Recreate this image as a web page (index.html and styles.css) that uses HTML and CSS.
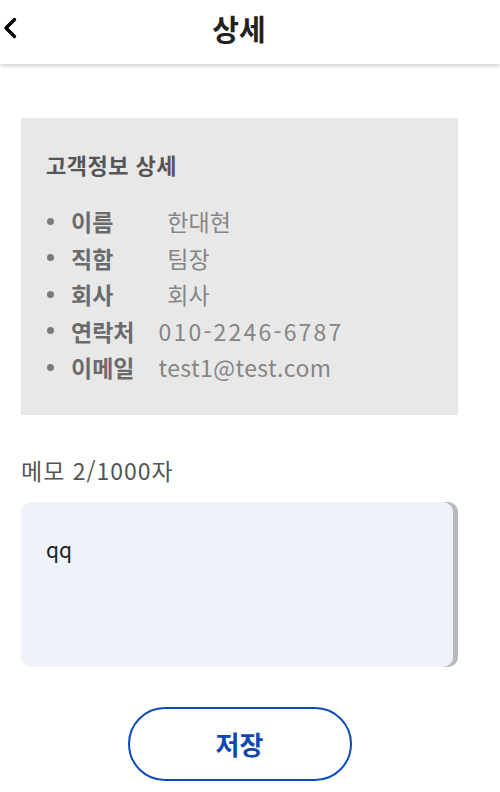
FILE: index.html
```html
<!DOCTYPE html>
<html lang="ko">
<head>
<meta charset="utf-8">
<link rel="stylesheet" href="styles.css">
</head>
<body>
<header class="topbar">
  <button class="back" aria-label="뒤로">
    <svg width="14" height="22" viewBox="0 0 14 22"><polyline points="11.5,2.5 3,11 11.5,19.5" fill="none" stroke="#000" stroke-width="3.4" stroke-linecap="round" stroke-linejoin="round"/></svg>
  </button>
  <h1 class="title">상세</h1>
  <span></span>
</header>
<main class="page">
  <section class="info">
    <h2 class="info-title">고객정보 상세</h2>
    <ul class="info-list">
      <li><span class="label short">이름</span><span class="value">한대현</span></li>
      <li><span class="label short">직함</span><span class="value">팀장</span></li>
      <li><span class="label short">회사</span><span class="value">회사</span></li>
      <li><span class="label">연락처</span><span class="value phone">010-2246-6787</span></li>
      <li><span class="label">이메일</span><span class="value email">test1@test.com</span></li>
    </ul>
  </section>
  <div class="memo-label">메모 2/1000자</div>
  <div class="memo">qq</div>
  <div class="actions"><button class="save">저장</button></div>
</main>
</body>
</html>
```
FILE: styles.css
```css
* { box-sizing: border-box; }
body {
  margin: 0;
  background: #fff;
  font-family: "Noto Sans CJK KR", "Noto Sans", sans-serif;
}
.topbar {
  height: 64px;
  display: grid;
  grid-template-columns: 40px 1fr 40px;
  align-items: center;
  padding-right: 22px;
  background: #fff;
  box-shadow: 0 2px 4px rgba(0,0,0,0.18);
}
.back {
  border: 0;
  background: none;
  padding: 0 0 0 3px;
  height: 22px;
  display: flex;
  align-items: center;
  margin-top: -8px;
}
.title {
  margin: 0;
  text-align: center;
  font-size: 29px;
  line-height: 40px;
  font-weight: 700;
  color: #222;
  margin-top: -8px;
}
.page {
  padding: 54px 42px 0 21px;
}
.info {
  background: #e8e8e8;
  padding: 33px 25px 29px;
}
.info-title {
  margin: 0;
  font-size: 22px;
  line-height: 26px;
  letter-spacing: 0.5px;
  font-weight: 700;
  color: #555;
}
.info-list {
  list-style: none;
  margin: 26px 0 0;
  padding: 0;
}
.info-list li {
  display: flex;
  align-items: center;
  height: 36.5px;
  font-size: 23px;
}
.info-list li::before {
  content: "";
  width: 7px;
  height: 7px;
  border-radius: 50%;
  background: #7a7a7a;
  margin: 0 17px 0 1px;
}
.label {
  font-weight: 700;
  color: #6b6b6b;
  margin-right: 24px;
}
.label.short { margin-right: 54px; }
.value {
  color: #858585;
}
.value.phone {
  letter-spacing: 2.2px;
}
.value.email {
  letter-spacing: 0.4px;
}
.memo-label {
  margin-top: 40px;
  font-size: 23px;
  line-height: 30px;
  letter-spacing: 1px;
  color: #555;
}
.memo {
  margin-top: 17px;
  height: 165px;
  border-radius: 10px;
  background: #eef3fa;
  box-shadow: inset -5px 0 0 #b9b9bd;
  padding: 34px 25px;
  font-size: 21px;
  line-height: 26px;
  color: #222;
}
.actions {
  display: flex;
  justify-content: center;
  margin-top: 40px;
}
.save {
  width: 224px;
  height: 74px;
  border: 2px solid #0b4cbd;
  border-radius: 37px;
  background: #fff;
  color: #0d47b0;
  font-family: inherit;
  font-size: 26px;
  font-weight: 700;
}
```
